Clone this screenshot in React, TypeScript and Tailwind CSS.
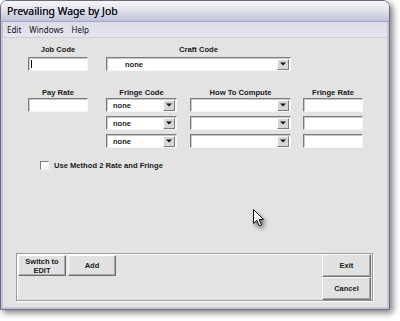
import React from "react";

const lbl = "font-['Liberation_Sans',Arial,sans-serif] font-bold text-[7.6px] leading-[9px] text-[#1a1a1a] text-center";

function TextBox({ w }: { w: number }) {
  return (
    <div
      className="h-[14px] bg-white border border-t-[#7c7c7c] border-l-[#7c7c7c] border-b-[#f6f6f6] border-r-[#f6f6f6] shadow-[inset_1px_1px_0_#c8c8c8]"
      style={{ width: w }}
    />
  );
}

function Select({ w, text, pl = 6 }: { w: number; text?: string; pl?: number }) {
  return (
    <div
      className="h-[14px] bg-white border border-t-[#7c7c7c] border-l-[#7c7c7c] border-b-[#f6f6f6] border-r-[#f6f6f6] shadow-[inset_1px_1px_0_#c8c8c8] flex items-center justify-between pr-[1px]"
      style={{ width: w }}
    >
      <span
        className="font-['Liberation_Sans',Arial,sans-serif] font-bold text-[7.5px] leading-[9px] text-[#1a1a1a]"
        style={{ paddingLeft: pl }}
      >
        {text ?? ""}
      </span>
      <div className="w-[12px] h-[11px] bg-[#d6d6d6] border border-t-white border-l-white border-b-[#7a7a7a] border-r-[#7a7a7a] flex items-center justify-center">
        <svg width="6" height="4" viewBox="0 0 6 4">
          <path d="M0 0.5 L6 0.5 L3 3.5 Z" fill="#111" />
        </svg>
      </div>
    </div>
  );
}

function Btn({ w, h, children }: { w: number; h: number; children: React.ReactNode }) {
  return (
    <div
      className="bg-[#e1e1e1] border border-t-white border-l-white border-b-[#6f6f6f] border-r-[#6f6f6f] shadow-[inset_-1px_-1px_0_#a8a8a8] flex items-center justify-center text-center font-['Liberation_Sans',Arial,sans-serif] font-bold text-[7.5px] leading-[9px] text-[#1a1a1a]"
      style={{ width: w, height: h }}
    >
      {children}
    </div>
  );
}

export default function App() {
  return (
    <div className="w-[400px] h-[321px] bg-white relative overflow-hidden">
      <div className="w-[390px] h-[310px] flex flex-col border border-[#6c6c7c] rounded-t-[7px] overflow-hidden shadow-[3px_3px_6px_rgba(0,0,0,0.5)]">
        {/* Title bar */}
        <div className="h-[21px] shrink-0 bg-gradient-to-b from-[#f6f6f9] via-[#dfe0ea] to-[#bfc1d7] border-b border-[#a5a7c0] flex items-center pl-[6px]">
          <span className="font-['Noto_Sans',sans-serif] text-[10.4px] text-[#181826] leading-none [text-shadow:0_0_0.3px_#181826]">
            Prevailing Wage by Job
          </span>
        </div>
        {/* Menu bar */}
        <div className="h-[15px] shrink-0 bg-gradient-to-b from-[#dcdde8] to-[#e6e6ee] border-l-[2px] border-r-[2px] border-[#c4c5d4] flex items-center pl-[4px] gap-[8px] font-['Noto_Sans',sans-serif] text-[8px] text-[#111] leading-none">
          <span>Edit</span>
          <span>Windows</span>
          <span>Help</span>
        </div>
        {/* Body */}
        <div className="flex-1 flex flex-col bg-[#e3e3e3] border-l-[2px] border-r-[2px] border-b-[2px] border-[#c4c5d4] border-t border-t-[#cfcfd8]">
          {/* Section 1 */}
          <div className="flex mt-[7px] pl-[25px]">
            <div className="flex flex-col items-center w-[60px]">
              <div className={lbl}>Job Code</div>
              <div className="mt-[3px]">
                <div className="relative">
                  <TextBox w={60} />
                  <div className="absolute left-[3px] top-[3px] w-px h-[8px] bg-black" />
                </div>
              </div>
            </div>
            <div className="flex flex-col items-center w-[185px] ml-[18px]">
              <div className={lbl}>Craft Code</div>
              <div className="mt-[3px]">
                <Select w={185} text="none" pl={18} />
              </div>
            </div>
          </div>

          {/* Section 2 */}
          <div className="flex mt-[17px] pl-[25px]">
            <div className="flex flex-col items-center w-[60px]">
              <div className={lbl}>Pay Rate</div>
              <div className="mt-[1px]">
                <TextBox w={60} />
              </div>
            </div>
            <div className="flex flex-col items-center w-[71px] ml-[18px] gap-[4px]">
              <div className={`${lbl} mb-[-3px]`}>Fringe Code</div>
              <Select w={71} text="none" pl={6} />
              <Select w={71} text="none" pl={6} />
              <Select w={71} text="none" pl={6} />
            </div>
            <div className="flex flex-col items-center w-[101px] ml-[13px] gap-[4px]">
              <div className={`${lbl} mb-[-3px]`}>How To Compute</div>
              <Select w={101} />
              <Select w={101} />
              <Select w={101} />
            </div>
            <div className="flex flex-col items-center w-[60px] ml-[12px] gap-[4px]">
              <div className={`${lbl} mb-[-3px]`}>Fringe Rate</div>
              <TextBox w={60} />
              <TextBox w={60} />
              <TextBox w={60} />
            </div>
          </div>

          {/* Checkbox */}
          <div className="flex items-center mt-[13px] pl-[37px]">
            <div className="w-[9px] h-[9px] bg-white border border-t-[#7c7c7c] border-l-[#7c7c7c] border-b-[#f6f6f6] border-r-[#f6f6f6]" />
            <span className="ml-[5px] font-['Liberation_Sans',Arial,sans-serif] font-bold text-[7.6px] leading-[9px] text-[#1a1a1a]">
              Use Method 2 Rate and Fringe
            </span>
          </div>

          <div className="flex-1" />

          {/* Bottom panel */}
          <div className="ml-[13px] mb-[6px] w-[357px] h-[48px] border border-[#9c9c9c] shadow-[inset_1px_1px_0_#fff,1px_1px_0_#fff] flex justify-between">
            <div className="flex items-start pl-[1px] pt-[1px] gap-[2px]">
              <Btn w={48} h={21}>
                Switch to
                <br />
                EDIT
              </Btn>
              <Btn w={48} h={21}>
                Add
              </Btn>
            </div>
            <div className="flex flex-col pr-[1px]">
              <Btn w={49} h={23}>
                Exit
              </Btn>
              <Btn w={49} h={23}>
                Cancel
              </Btn>
            </div>
          </div>
        </div>
      </div>

      {/* Mouse cursor */}
      <div className="absolute left-[253px] top-[209px]">
        <svg width="16" height="22" viewBox="0 0 16 22" className="drop-shadow-[2px_3px_2px_rgba(0,0,0,0.55)]">
          <path
            d="M0.5 0.5 L0.5 14.5 L3.8 11.3 L6.2 16.8 L8.4 15.8 L6.1 10.5 L10.5 10.5 Z"
            fill="#fff"
            stroke="#111"
            strokeWidth="1"
            strokeLinejoin="miter"
          />
        </svg>
      </div>
    </div>
  );
}
